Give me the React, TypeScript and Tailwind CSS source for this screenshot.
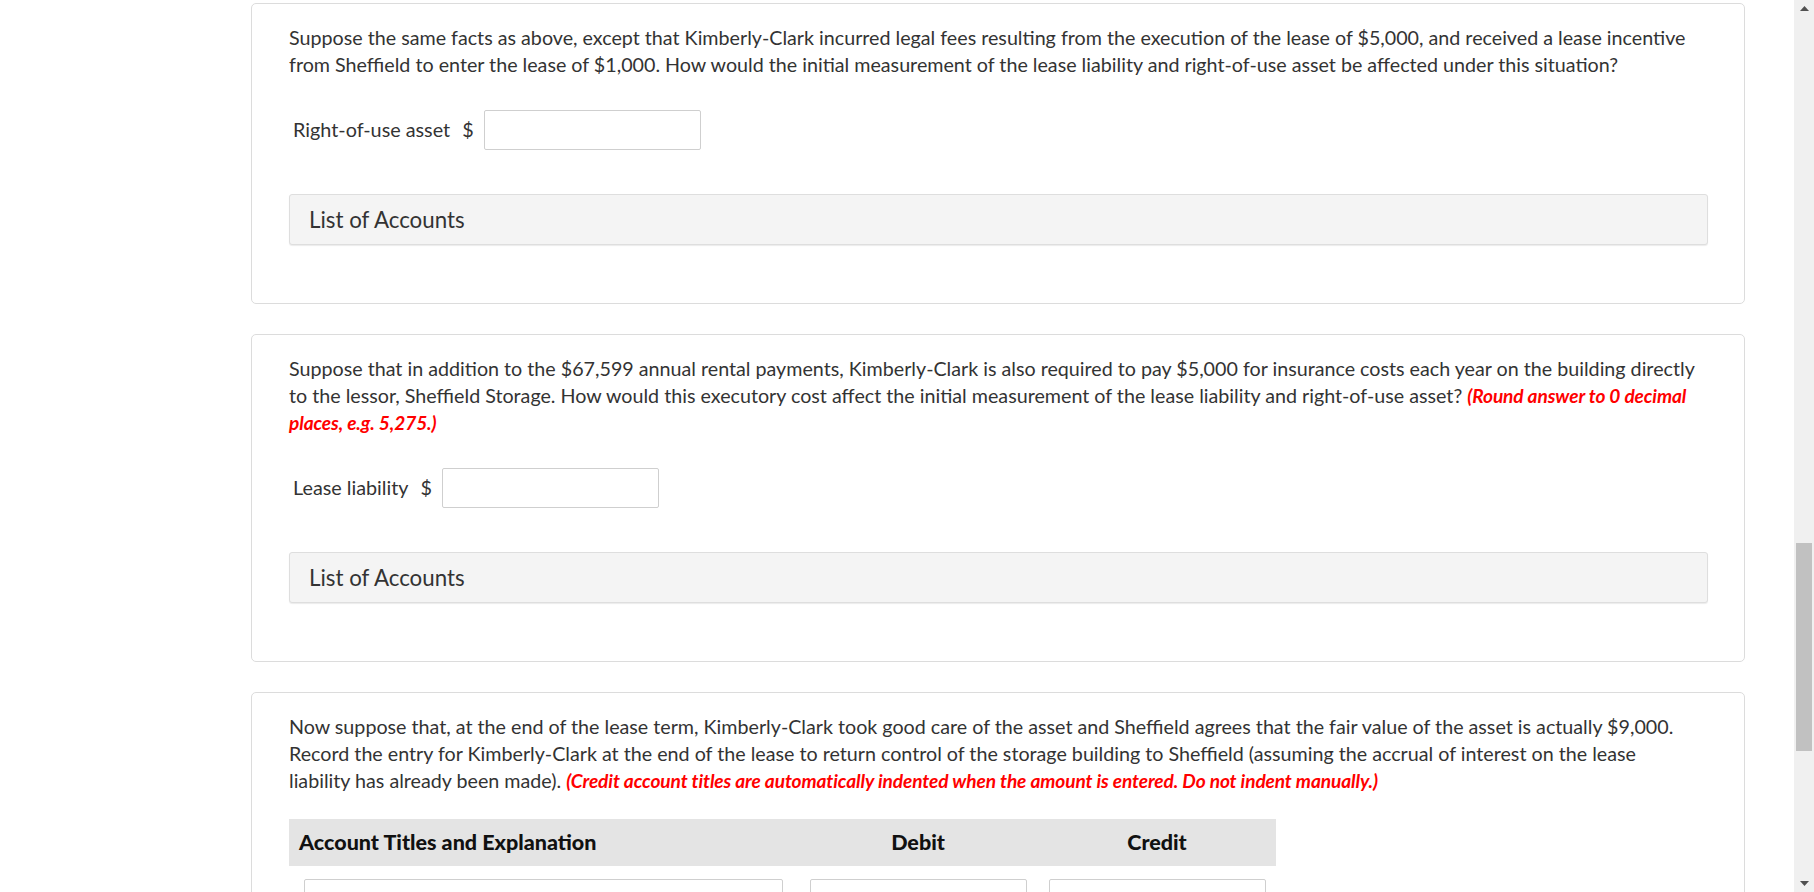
import type { ReactNode } from "react";

function Card({ children }: { children: ReactNode }): JSX.Element {
  return (
    <div className="rounded-[5px] border border-[#dcdcdc] pb-[58px] pl-[37px] pr-[36px] pt-[20px]">{children}</div>
  );
}

function Prompt({ lines }: { lines: ReactNode[] }): JSX.Element {
  return (
    <p className="text-[19.7px] leading-[27px]">
      {lines.map((l, i) => (
        <span key={i} className="block whitespace-nowrap">
          {l}
        </span>
      ))}
    </p>
  );
}

function Red({ children }: { children: ReactNode }): JSX.Element {
  return <span className="text-[19.1px] font-bold italic tracking-[-0.1px] text-[#ff0000]">{children}</span>;
}

function AmountRow({ label }: { label: string }): JSX.Element {
  return (
    <div className="mt-[32px] flex h-[40px] items-center pl-[4px] text-[19.8px]">
      <span>{label}</span>
      <span className="ml-[12px]">$</span>
      <input className="ml-[10px] h-[40px] w-[217px] rounded-[2px] border border-[#cfcfcf] bg-white outline-none" />
    </div>
  );
}

function ListOfAccounts(): JSX.Element {
  return (
    <div className="mt-[44px] flex h-[51px] items-center rounded-[3px] border border-[#dedede] bg-[#f4f4f4] pl-[19px] text-[22.3px] shadow-[0_1px_1px_rgba(0,0,0,0.08)]">
      List of Accounts
    </div>
  );
}

function Scrollbar(): JSX.Element {
  return (
    <div className="flex h-[892px] w-[20px] shrink-0 flex-col bg-[#f0f0f0]">
      <div className="flex h-[17px] items-center justify-center">
        <svg width="9" height="5" viewBox="0 0 9 5">
          <path d="M4.5 0 L9 5 L0 5 Z" fill="#505050" />
        </svg>
      </div>
      <div className="mx-[2px] mt-[526px] h-[208px] bg-[#c1c1c1]" />
      <div className="flex-1" />
      <div className="flex h-[17px] items-center justify-center">
        <svg width="9" height="5" viewBox="0 0 9 5">
          <path d="M0 0 L9 0 L4.5 5 Z" fill="#505050" />
        </svg>
      </div>
    </div>
  );
}

export default function App(): JSX.Element {
  return (
    <div className="flex h-[892px] w-[1814px] overflow-hidden bg-white font-['Lato','Open_Sans',sans-serif] text-[#333]">
      <div className="h-[892px] flex-1 overflow-hidden">
        <div className="ml-[251px] mr-[49px] flex flex-col gap-[30px] pt-[3px]">
          <Card>
            <Prompt
              lines={[
                "Suppose the same facts as above, except that Kimberly-Clark incurred legal fees resulting from the execution of the lease of $5,000, and received a lease incentive",
                "from Sheffield to enter the lease of $1,000. How would the initial measurement of the lease liability and right-of-use asset be affected under this situation?",
              ]}
            />
            <AmountRow label="Right-of-use asset" />
            <ListOfAccounts />
          </Card>

          <Card>
            <Prompt
              lines={[
                "Suppose that in addition to the $67,599 annual rental payments, Kimberly-Clark is also required to pay $5,000 for insurance costs each year on the building directly",
                <>
                  to the lessor, Sheffield Storage. How would this executory cost affect the initial measurement of the lease liability and right-of-use asset?{" "}
                  <Red>(Round answer to 0 decimal</Red>
                </>,
                <Red>places, e.g. 5,275.)</Red>,
              ]}
            />
            <AmountRow label="Lease liability" />
            <ListOfAccounts />
          </Card>

          <Card>
            <Prompt
              lines={[
                "Now suppose that, at the end of the lease term, Kimberly-Clark took good care of the asset and Sheffield agrees that the fair value of the asset is actually $9,000.",
                "Record the entry for Kimberly-Clark at the end of the lease to return control of the storage building to Sheffield (assuming the accrual of interest on the lease",
                <>
                  liability has already been made).{" "}
                  <Red>(Credit account titles are automatically indented when the amount is entered. Do not indent manually.)</Red>
                </>,
              ]}
            />
            <div className="mt-[25px] w-[987px]">
              <div className="grid h-[47px] grid-cols-[509px_240px_238px] items-center bg-[#e4e4e4] text-[21.5px] font-black text-[#111]">
                <div className="pl-[10px]">Account Titles and Explanation</div>
                <div className="text-center">Debit</div>
                <div className="text-center">Credit</div>
              </div>
              <div className="mt-[13px] grid grid-cols-[509px_240px_238px]">
                <div className="flex justify-center">
                  <input className="h-[40px] w-[479px] rounded-[2px] border border-[#cfcfcf] outline-none" />
                </div>
                <div className="flex justify-center">
                  <input className="h-[40px] w-[217px] rounded-[2px] border border-[#cfcfcf] outline-none" />
                </div>
                <div className="flex justify-center">
                  <input className="h-[40px] w-[217px] rounded-[2px] border border-[#cfcfcf] outline-none" />
                </div>
              </div>
            </div>
          </Card>
        </div>
      </div>
      <Scrollbar />
    </div>
  );
}
